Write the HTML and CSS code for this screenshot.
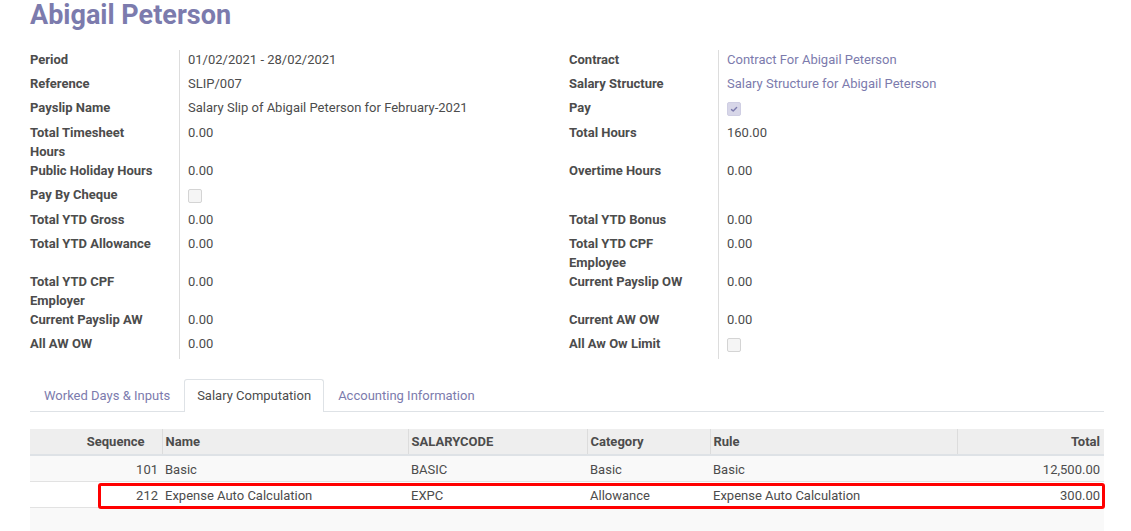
FILE: index.html
```html
<!DOCTYPE html>
<html>
<head>
<meta charset="utf-8">
<link rel="stylesheet" href="styles.css">
</head>
<body>
<div class="sheet">
  <h1 class="title">Abigail Peterson</h1>
  <div class="form-grid">
    <div class="lbl">Period</div><div class="val">01/02/2021 - 28/02/2021</div>
    <div class="lbl">Contract</div><div class="val"><a class="link">Contract For Abigail Peterson</a></div>

    <div class="lbl">Reference</div><div class="val">SLIP/007</div>
    <div class="lbl">Salary Structure</div><div class="val"><a class="link">Salary Structure for Abigail Peterson</a></div>

    <div class="lbl">Payslip Name</div><div class="val">Salary Slip of Abigail Peterson for February-2021</div>
    <div class="lbl">Pay</div><div class="val"><span class="checkbox checked"><svg viewBox="0 0 14 14" width="14" height="14"><path d="M4.5 7.6 L6.2 9 L9.6 5.6" fill="none" stroke="#7c7bad" stroke-width="1.4" stroke-linecap="round" stroke-linejoin="round"/></svg></span></div>

    <div class="lbl">Total Timesheet Hours</div><div class="val">0.00</div>
    <div class="lbl">Total Hours</div><div class="val">160.00</div>

    <div class="lbl">Public Holiday Hours</div><div class="val">0.00</div>
    <div class="lbl">Overtime Hours</div><div class="val">0.00</div>

    <div class="lbl">Pay By Cheque</div><div class="val"><span class="checkbox"></span></div>
    <div class="lbl"></div><div class="val"></div>

    <div class="lbl">Total YTD Gross</div><div class="val">0.00</div>
    <div class="lbl">Total YTD Bonus</div><div class="val">0.00</div>

    <div class="lbl">Total YTD Allowance</div><div class="val">0.00</div>
    <div class="lbl">Total YTD CPF Employee</div><div class="val">0.00</div>

    <div class="lbl">Total YTD CPF Employer</div><div class="val">0.00</div>
    <div class="lbl">Current Payslip OW</div><div class="val">0.00</div>

    <div class="lbl">Current Payslip AW</div><div class="val">0.00</div>
    <div class="lbl">Current AW OW</div><div class="val">0.00</div>

    <div class="lbl">All AW OW</div><div class="val">0.00</div>
    <div class="lbl">All Aw Ow Limit</div><div class="val"><span class="checkbox"></span></div>
  </div>

  <div class="tabs">
    <div class="tab">Worked Days &amp; Inputs</div>
    <div class="tab active">Salary Computation</div>
    <div class="tab">Accounting Information</div>
  </div>

  <div class="table-wrap">
    <table class="lines">
      <colgroup>
        <col class="c-seq"><col class="c-name"><col class="c-code"><col class="c-cat"><col class="c-rule"><col class="c-total">
      </colgroup>
      <thead>
        <tr>
          <th class="num seq-h">Sequence</th>
          <th>Name</th>
          <th>SALARYCODE</th>
          <th>Category</th>
          <th>Rule</th>
          <th class="num">Total</th>
        </tr>
      </thead>
      <tbody>
        <tr>
          <td class="num">101</td><td>Basic</td><td>BASIC</td><td>Basic</td><td>Basic</td><td class="num">12,500.00</td>
        </tr>
        <tr>
          <td class="num">212</td><td>Expense Auto Calculation</td><td>EXPC</td><td>Allowance</td><td>Expense Auto Calculation</td><td class="num">300.00</td>
        </tr>
        <tr class="empty">
          <td></td><td></td><td></td><td></td><td></td><td></td>
        </tr>
      </tbody>
    </table>
    <div class="highlight"></div>
  </div>
</div>
</body>
</html>
```
FILE: styles.css
```css
html, body {
  margin: 0;
  padding: 0;
  background: #ffffff;
}
body {
  font-family: Roboto, "Liberation Sans", Arial, sans-serif;
  font-size: 13px;
  color: #4c4c4c;
  overflow: hidden;
}
.sheet {
  padding: 0 27px 0 30px;
}
.title {
  margin: 0;
  padding-top: 0;
  font-size: 27px;
  line-height: 30px;
  font-weight: 700;
  color: #7c7bad;
}
.form-grid {
  margin-top: 20px;
  display: grid;
  grid-template-columns: 150px 389px 150px 1fr;
}
.lbl {
  box-sizing: border-box;
  min-height: 24px;
  line-height: 19px;
  padding-right: 21px;
  font-weight: 700;
  border-right: 1px solid #dddddd;
}
.val {
  min-height: 24px;
  line-height: 19px;
  padding-left: 8px;
}
.link {
  color: #7c7bad;
  text-decoration: none;
}
.checkbox {
  display: block;
  box-sizing: border-box;
  width: 14px;
  height: 14px;
  margin-top: 4px;
  margin-bottom: 7px;
  border: 1px solid #d4d4d4;
  border-radius: 2px;
  background: #f5f5f5;
}
.checkbox svg {
  display: block;
  margin: -1px;
}
.checkbox.checked {
  background: #d7d6e8;
  border-color: #cfcee3;
}
.tabs {
  margin-top: 20px;
  display: flex;
  border-bottom: 1px solid #dee2e6;
  height: 32px;
}
.tab {
  box-sizing: border-box;
  height: 33px;
  padding: 0 13px 0 13px;
  line-height: 32px;
  margin-right: 0;
  color: #7c7bad;
  border: 1px solid transparent;
  border-bottom: none;
}
.tab.active {
  padding: 0 12px;
  color: #4c4c4c;
  background: #ffffff;
  border-color: #dee2e6;
  border-top-left-radius: 3px;
  border-top-right-radius: 3px;
}
.table-wrap {
  position: relative;
  margin-top: 17px;
}
.lines {
  width: 100%;
  border-collapse: collapse;
  table-layout: fixed;
}
.c-seq { width: 132px; }
.c-name { width: 246px; }
.c-code { width: 179px; }
.c-cat { width: 123px; }
.c-rule { width: 247px; }
.c-total { width: 147px; }
.lines th {
  background: #eeeeee;
  font-weight: 700;
  text-align: left;
  height: 25px;
  padding: 0 3px;
  border-left: 1px solid #dcdcdc;
  border-bottom: 2px solid #dee2e6;
  white-space: nowrap;
}
.lines th:first-child {
  border-left: none;
}
.lines th.seq-h {
  padding-right: 17px;
}
.lines td {
  height: 24px;
  padding: 1px 3px 0 3px;
  border-bottom: 1px solid #e2e2e2;
  white-space: nowrap;
}
.lines .num {
  text-align: right;
  padding-right: 4px;
}
.lines tbody tr:nth-child(odd) td {
  background: #f9f9f9;
}
.lines tbody tr:nth-child(even) td {
  background: #ffffff;
}
.lines tr.empty td {
  border-bottom: none;
  height: 30px;
}
.highlight {
  position: absolute;
  left: 68px;
  top: 54px;
  width: 1007px;
  height: 26px;
  box-sizing: border-box;
  border: 3px solid #ff0000;
  border-radius: 3px;
  pointer-events: none;
}
```
